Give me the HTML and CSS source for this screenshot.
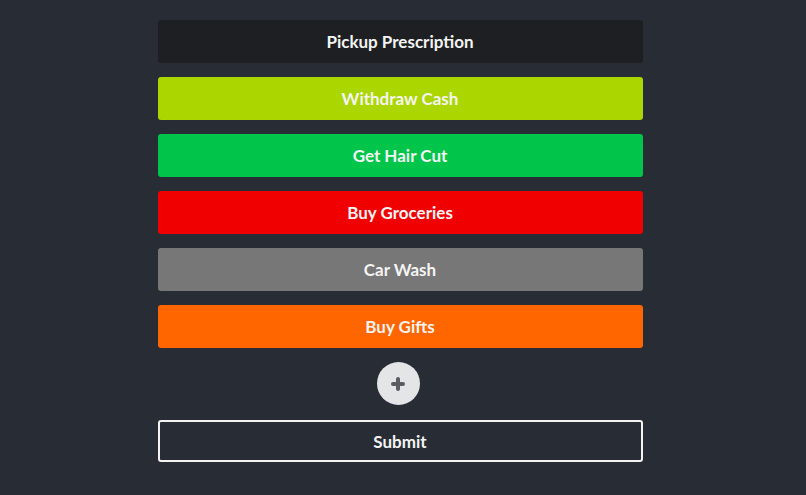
FILE: index.html
```html
<!DOCTYPE html>
<html>
<head>
<meta charset="utf-8">
<link rel="stylesheet" href="styles.css">
</head>
<body>
<div class="list">
  <div class="task task-dark">Pickup Prescription</div>
  <div class="task task-lime">Withdraw Cash</div>
  <div class="task task-green">Get Hair Cut</div>
  <div class="task task-red">Buy Groceries</div>
  <div class="task task-gray">Car Wash</div>
  <div class="task task-orange">Buy Gifts</div>
  <button class="add" aria-label="Add">
    <svg width="16" height="16" viewBox="0 0 16 16"><path d="M8 3v10M3 8h10" stroke="#5a5c60" stroke-width="4" stroke-linecap="round"/></svg>
  </button>
  <button class="submit">Submit</button>
</div>
</body>
</html>
```
FILE: styles.css
```css
html, body {
  margin: 0;
  padding: 0;
  background: #282c35;
  height: 100%;
}
body {
  font-family: Lato, "Open Sans", sans-serif;
}
.list {
  width: 485px;
  margin: 0 auto;
  padding-top: 20px;
  display: flex;
  flex-direction: column;
  align-items: center;
  gap: 14px;
  position: relative;
  left: -3px;
}
.task {
  width: 100%;
  height: 43px;
  box-sizing: border-box;
  border-radius: 3px;
  display: flex;
  align-items: center;
  justify-content: center;
  color: #f4f4f4;
  font-weight: 700;
  font-size: 17px;
}
.task-dark { background: #1e1f22; }
.task-lime { background: #acd600; }
.task-green { background: #00c54b; }
.task-red { background: #f00000; }
.task-gray { background: #777777; }
.task-orange { background: #ff6600; }
.add {
  width: 43px;
  height: 43px;
  border-radius: 50%;
  border: none;
  background: #e4e5e7;
  display: flex;
  align-items: center;
  justify-content: center;
  padding: 0;
  margin-right: 4px;
}
.submit {
  width: 100%;
  height: 42px;
  box-sizing: border-box;
  background: transparent;
  border: 2px solid #f2f2f2;
  border-radius: 3px;
  color: #f4f4f4;
  font-family: Lato, sans-serif;
  font-weight: 700;
  font-size: 17px;
  margin-top: 1px;
}
```
